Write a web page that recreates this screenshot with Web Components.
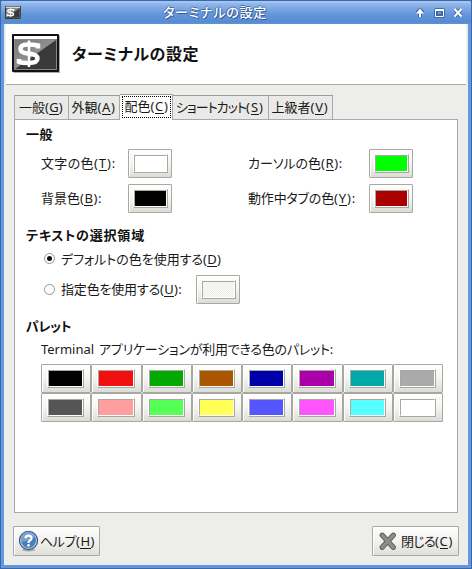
<!DOCTYPE html>
<html lang="ja"><head><meta charset="utf-8"><title>ターミナルの設定</title>
<style>
html,body{margin:0;height:100%;overflow:hidden;background:#3c68a8}
body{font:400 13px "Noto Sans","Noto Sans CJK JP",sans-serif;color:#1a1a1a}
</style></head><body>
<settings-window></settings-window>
<script>
const define=(name,css,html,init)=>customElements.define(name,class extends HTMLElement{
  connectedCallback(){
    if(this.shadowRoot)return;
    const t=document.createElement('template');
    t.innerHTML='<style>*{box-sizing:border-box}'+css+'</style>'+(typeof html==='function'?html(this):html);
    this.attachShadow({mode:'open'}).append(t.content.cloneNode(true));
    if(init)init(this);
  }
});

/* Text with an optional access key; letter spacing adapts to the requested widths. */
define('fit-label',`:host{display:inline-block;white-space:nowrap;line-height:18px;flex:none}
  span{display:inline-block;white-space:pre;font-feature-settings:"palt"}
  u{text-decoration:none;border-bottom:1px solid currentColor;display:inline-block;line-height:14px}`,
  e=>{const k=e.getAttribute('key'),s=e.getAttribute('suffix')||'';
    return `<span>${e.getAttribute('text')}</span>`+(k?`<span>(<u>${k}</u>)${s}</span>`:'');},
  e=>{const ws=[+e.getAttribute('w'),+e.getAttribute('kw')||(e.hasAttribute('suffix')?22:18)];
    e.shadowRoot.querySelectorAll('span').forEach((s,i)=>{
      const nat=s.getBoundingClientRect().width,n=s.textContent.length;
      if(nat&&ws[i]){s.style.letterSpacing=(ws[i]-nat)/n+'px';s.style.width=ws[i]+'px';}
    });});

define('app-icon',`:host{display:block;flex:none}svg{display:block;width:100%;height:100%}`,
  `<svg viewBox="0 0 48 39" preserveAspectRatio="none"><defs><linearGradient id="a" x2="1" y2="1"><stop stop-color="#777"/><stop offset="1" stop-color="#aaa"/></linearGradient></defs>
  <rect x="1.5" y="1.5" width="46.5" height="37.5" fill="#aaa"/><rect width="47" height="38" rx="1" fill="#111"/>
  <rect x="2" y="2" width="43" height="34" fill="#888"/><rect x="2" y="2" width="43" height="3" fill="#fff"/>
  <rect x="3" y="6" width="41" height="29" fill="#393939"/><path d="M3 6H44L3 35Z" fill="url(#a)"/>
  <path d="M26 14.500V11.500Q22 10.500 15.500 10.500Q8.500 10.500 8.500 15Q8.500 18.800 16 19.500Q25.500 20.300 25.500 24.500Q25.500 29 16 29Q10 29 7 27.800V25" fill="none" stroke="#fff" stroke-width="4.500"/><path d="M17 6.500V33" stroke="#fff" stroke-width="2.500"/></svg>`);

define('title-bar',`:host{display:grid;grid-template-columns:163px 1fr auto;align-items:center;height:24px;padding:0 8px 0 0;
  background:linear-gradient(#3b67a8 0 1px,#a5c6f3 1px 2px,#90b5ea 4px,#6596dc 14px,#568ad2 22px,#6093dc);color:#fff}
  app-icon{width:16px;height:13px;margin-left:5px}
  fit-label{font-weight:500;text-shadow:1px 1px #355d98,-1px 0 #446fab,0 -1px #446fab}
  svg{display:block;width:50px;height:14px;margin-top:1px}`,
  `<app-icon></app-icon><fit-label text="ターミナルの設定" w="104"></fit-label>
  <svg viewBox="0 0 50 14"><g fill="none" stroke="#375e96" stroke-width="4" stroke-linejoin="round" opacity=".8"><path d="M6 11V5M3 7L6 4L9 7"/><path d="M22 4H29V10H22Z"/><path d="M41 3.500L47 10M47 3.500L41 10"/></g>
  <g fill="none" stroke="#fff" stroke-width="2"><path d="M6 11V5"/><path d="M21.500 3.500H29.500V10.500H21.500Z" stroke-width="1"/><path d="M21 4H30"/><path d="M40.500 3L47.500 10.500M47.500 3L40.500 10.500"/></g><path d="M6 2.500L10 7.500H2Z" fill="#fff"/></svg>`);

define('dialog-header',`:host{display:flex;align-items:center;height:61px;margin:0 2px;background:#fff;border-bottom:1px solid #aaa9a1;padding-left:6px;gap:12px}
  app-icon{width:48px;height:39px;margin-top:-1px}fit-label{font-size:16px;font-weight:700;line-height:24px;color:#111}`,
  `<app-icon></app-icon><fit-label text="ターミナルの設定" w="127"></fit-label>`);

define('tab-button',`:host{display:flex;align-items:center;justify-content:center;height:24px;background:#e9e9e7;border:1px solid #aaa9a5;border-left-width:0;border-bottom:0;border-top-color:#9c9c98;padding:0 1px 2px 0}
  :host([first]){border-left-width:1px}
  :host([active]){height:26px;background:#fff;margin-bottom:-1px;padding:0 0 2px}
  div{padding:1px}:host([active]) div{outline:1px dotted #000;padding:0 1px 0 2px;height:20px}`,
  `<div><slot></slot></div>`);

/* Raised button holding a sunken colour swatch. */
define('color-button',`:host{display:block;width:44px;height:29px;box-sizing:border-box;border:1px solid #a9a8a0;border-radius:1px;background:linear-gradient(#fff,#f4f4f2 50%,#dcdcd7);box-shadow:inset 1px 1px #fff;padding:4px 3px 4px 4px}
  div{height:19px;border:1px solid;border-color:#fff #a9a8a0 #a9a8a0 #fff;border-top-color:transparent}
  i{display:block;height:17px;border:1px solid;border-color:#a9a8a0 #fff #fff #a9a8a0;background:var(--swatch)}`,
  `<div><i></i></div>`,e=>e.style.setProperty('--swatch',e.getAttribute('color')));

define('radio-dot',`:host{display:block;width:11px;height:11px;border:1px solid #96968e;border-radius:50%;background:#fff;flex:none;padding:2px;box-sizing:border-box}
  :host([checked])::before{content:"";display:block;width:5px;height:5px;border-radius:50%;background:#111}`,``);

define('section-title',`:host{display:flex;align-items:center;box-sizing:border-box;font-weight:700;padding-left:11px;color:#111}`,`<slot></slot>`);

define('color-palette',`:host{display:grid;grid-template-columns:repeat(8,1fr);width:402px;height:58px;margin:1px 0 0 26px}
  color-button{width:auto;padding:4px 6px 4px 5px}`,
  ['#000','#f01010','#00aa00','#aa5500','#0000aa','#aa00aa','#00aaaa','#aaa','#555','#ff9e9e','#55ff55','#ffff55','#5555ff','#ff55ff','#55ffff','#fff'].map(c=>`<color-button color="${c}"></color-button>`).join(''));

define('action-button',`:host{display:flex;align-items:center;box-sizing:border-box;width:87px;height:30px;border:1px solid #a9a8a2;border-radius:1px;background:linear-gradient(#fdfdfc,#f2f2f0 50%,#dedfda);box-shadow:inset 1px 1px #fff;padding:0 0 1px 4px;gap:3px}
  ::slotted(svg){width:21px;height:22px;flex:none}`,`<slot></slot>`);

define('colors-page',`:host{display:flex;flex-direction:column;box-sizing:border-box;height:394px;border:1px solid #aaa9a5;background:#fff}
  .row{display:grid;grid-template-columns:113px 120px 121px 44px;align-items:center;height:29px;margin-bottom:6px}
  .row fit-label{padding-bottom:2px}
  .row fit-label:first-child{margin-left:26px}
  .radio{display:flex;align-items:center;padding-left:29px;gap:6px}`,
  `<section-title style="height:29px;padding-bottom:2px"><fit-label text="一般" w="27"></fit-label></section-title>
  <div class="row"><fit-label text="文字の色" w="53" key="T" suffix=":"></fit-label><color-button color="#fff"></color-button><fit-label text="カーソルの色" w="73" key="R" suffix=":"></fit-label><color-button color="#00ff00"></color-button></div>
  <div class="row"><fit-label text="背景色" w="39" key="B" suffix=":"></fit-label><color-button color="#000"></color-button><fit-label text="動作中タブの色" w="86" key="Y" suffix=":"></fit-label><color-button color="#aa0000"></color-button></div>
  <section-title style="height:18px;margin-top:7px"><fit-label text="テキストの選択領域" w="119"></fit-label></section-title>
  <div class="radio" style="height:30px;padding-bottom:1px"><radio-dot checked></radio-dot><fit-label text="デフォルトの色を使用する" w="142" key="D"></fit-label></div>
  <div class="radio" style="height:30px"><radio-dot></radio-dot><fit-label text="指定色を使用する" w="99" key="U" suffix=":"></fit-label><color-button color="repeating-conic-gradient(#eeeeec 0 25%,#fafaf9 0 50%) 0 0/2px 2px" style="margin-left:8px"></color-button></div>
  <section-title style="height:18px;margin-top:13px"><fit-label text="パレット" w="45"></fit-label></section-title>
  <div style="height:28px;padding:5px 0 0 26px;display:flex;gap:5px"><fit-label text="Terminal" w="53"></fit-label><fit-label text="アプリケーションが利用できる色のパレット:" w="234"></fit-label></div>
  <color-palette></color-palette>`);

define('settings-window',`:host{display:flex;flex-direction:column;width:472px;height:569px;box-sizing:border-box;border:solid #3c68a8;border-width:0 1px 1px;border-radius:4px 4px 0 0;overflow:hidden;background:#6297e4}
  title-bar{margin:0 -1px}
  main{flex:1;margin:0 3px 3px;background:#ededeb;display:flex;flex-direction:column}
  nav{display:grid;grid-template-columns:55px 51px 53px 96px 64px;align-items:end;height:34px;padding-left:10px;position:relative;z-index:1}
  colors-page{margin:0 10px}
  footer{display:flex;justify-content:space-between;padding:13px 9px 0}`,
  `<title-bar></title-bar><main><dialog-header></dialog-header>
  <nav><tab-button first><fit-label text="一般" w="26" key="G"></fit-label></tab-button><tab-button><fit-label text="外観" w="26" key="A"></fit-label></tab-button><tab-button active><fit-label text="配色" w="26" key="C"></fit-label></tab-button><tab-button><fit-label text="ショートカット" w="70" key="S"></fit-label></tab-button><tab-button><fit-label text="上級者" w="39" key="V"></fit-label></tab-button></nav>
  <colors-page></colors-page>
  <footer><action-button><svg viewBox="0 0 22 22"><ellipse cx="11" cy="20.500" rx="7" ry="1.500" fill="#aaa"/><circle cx="11" cy="10.500" r="9.500" fill="#c5d5e8" stroke="#2d568c" stroke-width="1.300"/><circle cx="11" cy="10.500" r="7.800" fill="#4e7db5"/><path d="M3.500 12Q10 12 18 6A7.800 7.800 0 0 0 3.500 12" fill="#7da2cf"/><path d="M7.800 8Q8 5.300 11 5.300Q14.200 5.300 14.200 8Q14.200 9.500 12.500 10.500Q11 11.300 11 13" fill="none" stroke="#fff" stroke-width="2.300"/><circle cx="11" cy="15.500" r="1.400" fill="#fff"/></svg><fit-label text="ヘルプ" w="36" key="H" kw="19" style="margin-left:-2px"></fit-label></action-button>
  <action-button><svg viewBox="0 0 22 22"><path d="M5.500 5L17 17.500M17 5L5.500 17.500" stroke="#555753" stroke-width="5.500" stroke-linecap="round"/><path d="M5.500 5L17 17.500M17 5L5.500 17.500" stroke="#8b8d89" stroke-width="3.700" stroke-linecap="round"/></svg><fit-label text="閉じる" w="34" key="C"></fit-label></action-button></footer></main>`);
</script></body></html>
